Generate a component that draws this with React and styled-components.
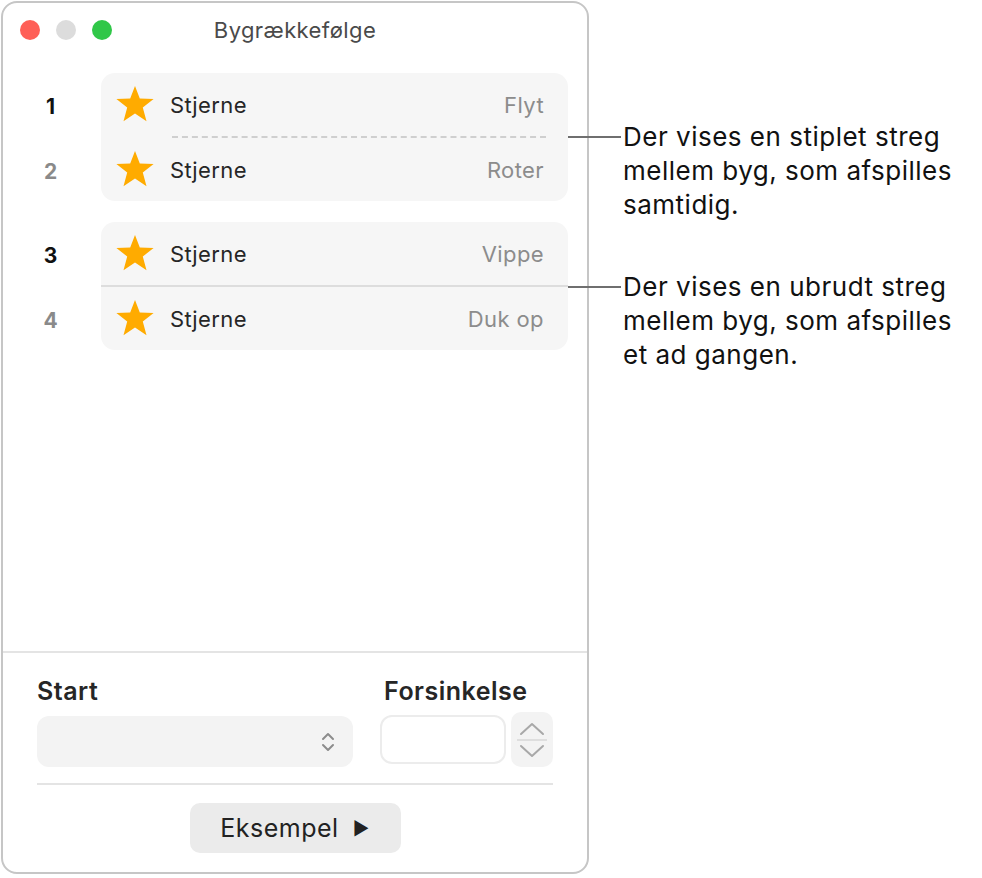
import React from 'react';
import styled, { createGlobalStyle } from 'styled-components';

const GlobalStyle = createGlobalStyle`
  html, body {
    margin: 0;
    padding: 0;
    background: #ffffff;
  }
  body {
    font-family: Inter, "Noto Sans", "Liberation Sans", sans-serif;
    color: #1d1d1f;
  }
`;

const Page = styled.div`
  display: flex;
  align-items: flex-start;
  padding: 1px;
`;

const Window = styled.div`
  width: 584px;
  height: 869px;
  border: 2px solid #c6c6c6;
  border-radius: 16px;
  display: flex;
  flex-direction: column;
  background: #fff;
  flex-shrink: 0;
`;

const TitleBar = styled.div`
  position: relative;
  height: 54px;
  display: flex;
  align-items: center;
  justify-content: center;
`;

const Lights = styled.div`
  position: absolute;
  left: 17px;
  top: 17px;
  display: flex;
  gap: 16px;
`;

const Light = styled.span`
  width: 20px;
  height: 20px;
  border-radius: 50%;
  background: ${p => p.$color};
`;

const Title = styled.div`
  font-size: 22px;
  color: #4a4a4a;
  letter-spacing: 0.4px;
`;

const List = styled.div`
  flex: 1;
  display: flex;
  flex-direction: column;
  gap: 21px;
  padding: 16px 19px 0 0;
`;

const Group = styled.div`
  display: flex;
  align-items: flex-start;
`;

const Numbers = styled.div`
  width: 98px;
  display: flex;
  flex-direction: column;
  gap: 2px;
`;

const Num = styled.div`
  height: 63px;
  box-sizing: border-box;
  padding: 3px 3px 0 0;
  display: flex;
  align-items: center;
  justify-content: center;
  font-size: 21px;
  font-weight: 700;
  color: ${p => (p.$lead ? '#111' : '#8a8a8a')};
`;

const Card = styled.div`
  flex: 1;
  background: #f6f6f6;
  border-radius: 14px;
  display: flex;
  flex-direction: column;
`;

const Row = styled.div`
  height: 63px;
  display: flex;
  align-items: center;
  padding: 0 24px 0 14px;
`;

const Divider = styled.div`
  height: 0;
  ${p =>
    p.$dashed
      ? `margin: 0 22px 0 71px; border-top: 2px dashed #cfcfcf;`
      : `margin: 0; border-top: 2px solid #dddddd;`}
`;

const Name = styled.span`
  flex: 1;
  margin-left: 15px;
  font-size: 22px;
  letter-spacing: 0.4px;
  color: #262626;
`;

const Effect = styled.span`
  font-size: 22px;
  letter-spacing: 0.4px;
  color: #8c8c8c;
`;

const Bottom = styled.div`
  border-top: 2px solid #e4e4e4;
  padding: 0 34px 19px;
  display: flex;
  flex-direction: column;
`;

const Controls = styled.div`
  display: flex;
  gap: 27px;
  padding: 21px 0 16px;
  border-bottom: 2px solid #e4e4e4;
`;

const Field = styled.div`
  display: flex;
  flex-direction: column;
  flex: ${p => (p.$grow ? 1 : 'none')};
`;

const Label = styled.div`
  font-size: 25px;
  font-weight: 600;
  letter-spacing: 0.5px;
  color: #262626;
  height: 34px;
  line-height: 34px;
  margin-bottom: ${p => p.$gap}px;
  padding-left: ${p => p.$indent || 0}px;
`;

const Select = styled.div`
  height: 51px;
  border-radius: 12px;
  background: #f3f3f3;
  display: flex;
  align-items: center;
  justify-content: flex-end;
  padding-right: 18px;
`;

const DelayRow = styled.div`
  display: flex;
  align-items: center;
  gap: 5px;
`;

const Input = styled.div`
  width: 122px;
  height: 45px;
  border: 2px solid #ececec;
  border-radius: 12px;
  background: #fff;
`;

const Stepper = styled.div`
  width: 42px;
  height: 55px;
  border-radius: 10px;
  background: #f3f3f3;
  display: flex;
  flex-direction: column;
  align-items: center;
  justify-content: center;
`;

const StepLine = styled.div`
  width: 30px;
  border-top: 2px solid #dedede;
  margin: 2px 0;
`;

const Actions = styled.div`
  display: flex;
  justify-content: center;
  padding-top: 18px;
`;

const PreviewButton = styled.button`
  width: 211px;
  height: 50px;
  border: none;
  border-radius: 10px;
  background: #ebebeb;
  font-family: inherit;
  font-size: 25px;
  letter-spacing: 0.5px;
  color: #222;
  display: flex;
  align-items: center;
  justify-content: center;
  gap: 14px;
  padding: 0;
`;

const Play = styled.span`
  font-size: 18px;
`;

const Notes = styled.div`
  display: flex;
  flex-direction: column;
  gap: 48px;
  padding-top: 119px;
`;

const Note = styled.div`
  display: flex;
  align-items: flex-start;
`;

const Leader = styled.div`
  width: 53px;
  margin-left: -21px;
  margin-top: 16px;
  border-top: 2px solid #6f6f6f;
  margin-right: 2px;
  flex-shrink: 0;
`;

const NoteText = styled.div`
  font-size: 26px;
  letter-spacing: 0.5px;
  line-height: 34px;
  color: #111;
  width: 350px;
`;

const Star = () => (
  <svg width="40" height="40" viewBox="0 0 40 40">
    <polygon
      fill="#ffab00"
      points="20,1 24.8,13.4 38.6,13.9 27.8,22.5 31.5,36.2 20,28.4 8.5,36.2 12.2,22.5 1.4,13.9 15.2,13.4"
    />
  </svg>
);

const UpDown = () => (
  <svg width="14" height="22" viewBox="0 0 14 22">
    <path d="M2 8 L7 3 L12 8 M2 14 L7 19 L12 14" fill="none" stroke="#8c8c8c" strokeWidth="2" strokeLinecap="round" strokeLinejoin="round" />
  </svg>
);

const Chevron = ({ up }) => (
  <svg width="28" height="16" viewBox="0 0 28 16">
    <path d={up ? 'M3 13 L14 3 L25 13' : 'M3 3 L14 13 L25 3'} fill="none" stroke="#a8a8a8" strokeWidth="2" strokeLinecap="round" strokeLinejoin="round" />
  </svg>
);

const groups = [
  { dashed: true, items: [{ n: 1, fx: 'Flyt', lead: true }, { n: 2, fx: 'Roter' }] },
  { dashed: false, items: [{ n: 3, fx: 'Vippe', lead: true }, { n: 4, fx: 'Duk op' }] },
];

export default function App() {
  return (
    <Page>
      <GlobalStyle />
      <Window>
        <TitleBar>
          <Lights>
            <Light $color="#fe5f57" />
            <Light $color="#dcdcdc" />
            <Light $color="#30c748" />
          </Lights>
          <Title>Bygrækkefølge</Title>
        </TitleBar>
        <List>
          {groups.map((g, gi) => (
            <Group key={gi}>
              <Numbers>
                {g.items.map(it => (
                  <Num key={it.n} $lead={it.lead}>{it.n}</Num>
                ))}
              </Numbers>
              <Card>
                {g.items.map((it, i) => (
                  <React.Fragment key={it.n}>
                    {i > 0 && <Divider $dashed={g.dashed} />}
                    <Row>
                      <Star />
                      <Name>Stjerne</Name>
                      <Effect>{it.fx}</Effect>
                    </Row>
                  </React.Fragment>
                ))}
              </Card>
            </Group>
          ))}
        </List>
        <Bottom>
          <Controls>
            <Field $grow>
              <Label $gap={8}>Start</Label>
              <Select>
                <UpDown />
              </Select>
            </Field>
            <Field>
              <Label $gap={4} $indent={4}>Forsinkelse</Label>
              <DelayRow>
                <Input />
                <Stepper>
                  <Chevron up />
                  <StepLine />
                  <Chevron />
                </Stepper>
              </DelayRow>
            </Field>
          </Controls>
          <Actions>
            <PreviewButton>
              Eksempel <Play>▶</Play>
            </PreviewButton>
          </Actions>
        </Bottom>
      </Window>
      <Notes>
        <Note>
          <Leader />
          <NoteText>Der vises en stiplet streg mellem byg, som afspilles samtidig.</NoteText>
        </Note>
        <Note>
          <Leader />
          <NoteText>Der vises en ubrudt streg mellem byg, som afspilles et ad gangen.</NoteText>
        </Note>
      </Notes>
    </Page>
  );
}
